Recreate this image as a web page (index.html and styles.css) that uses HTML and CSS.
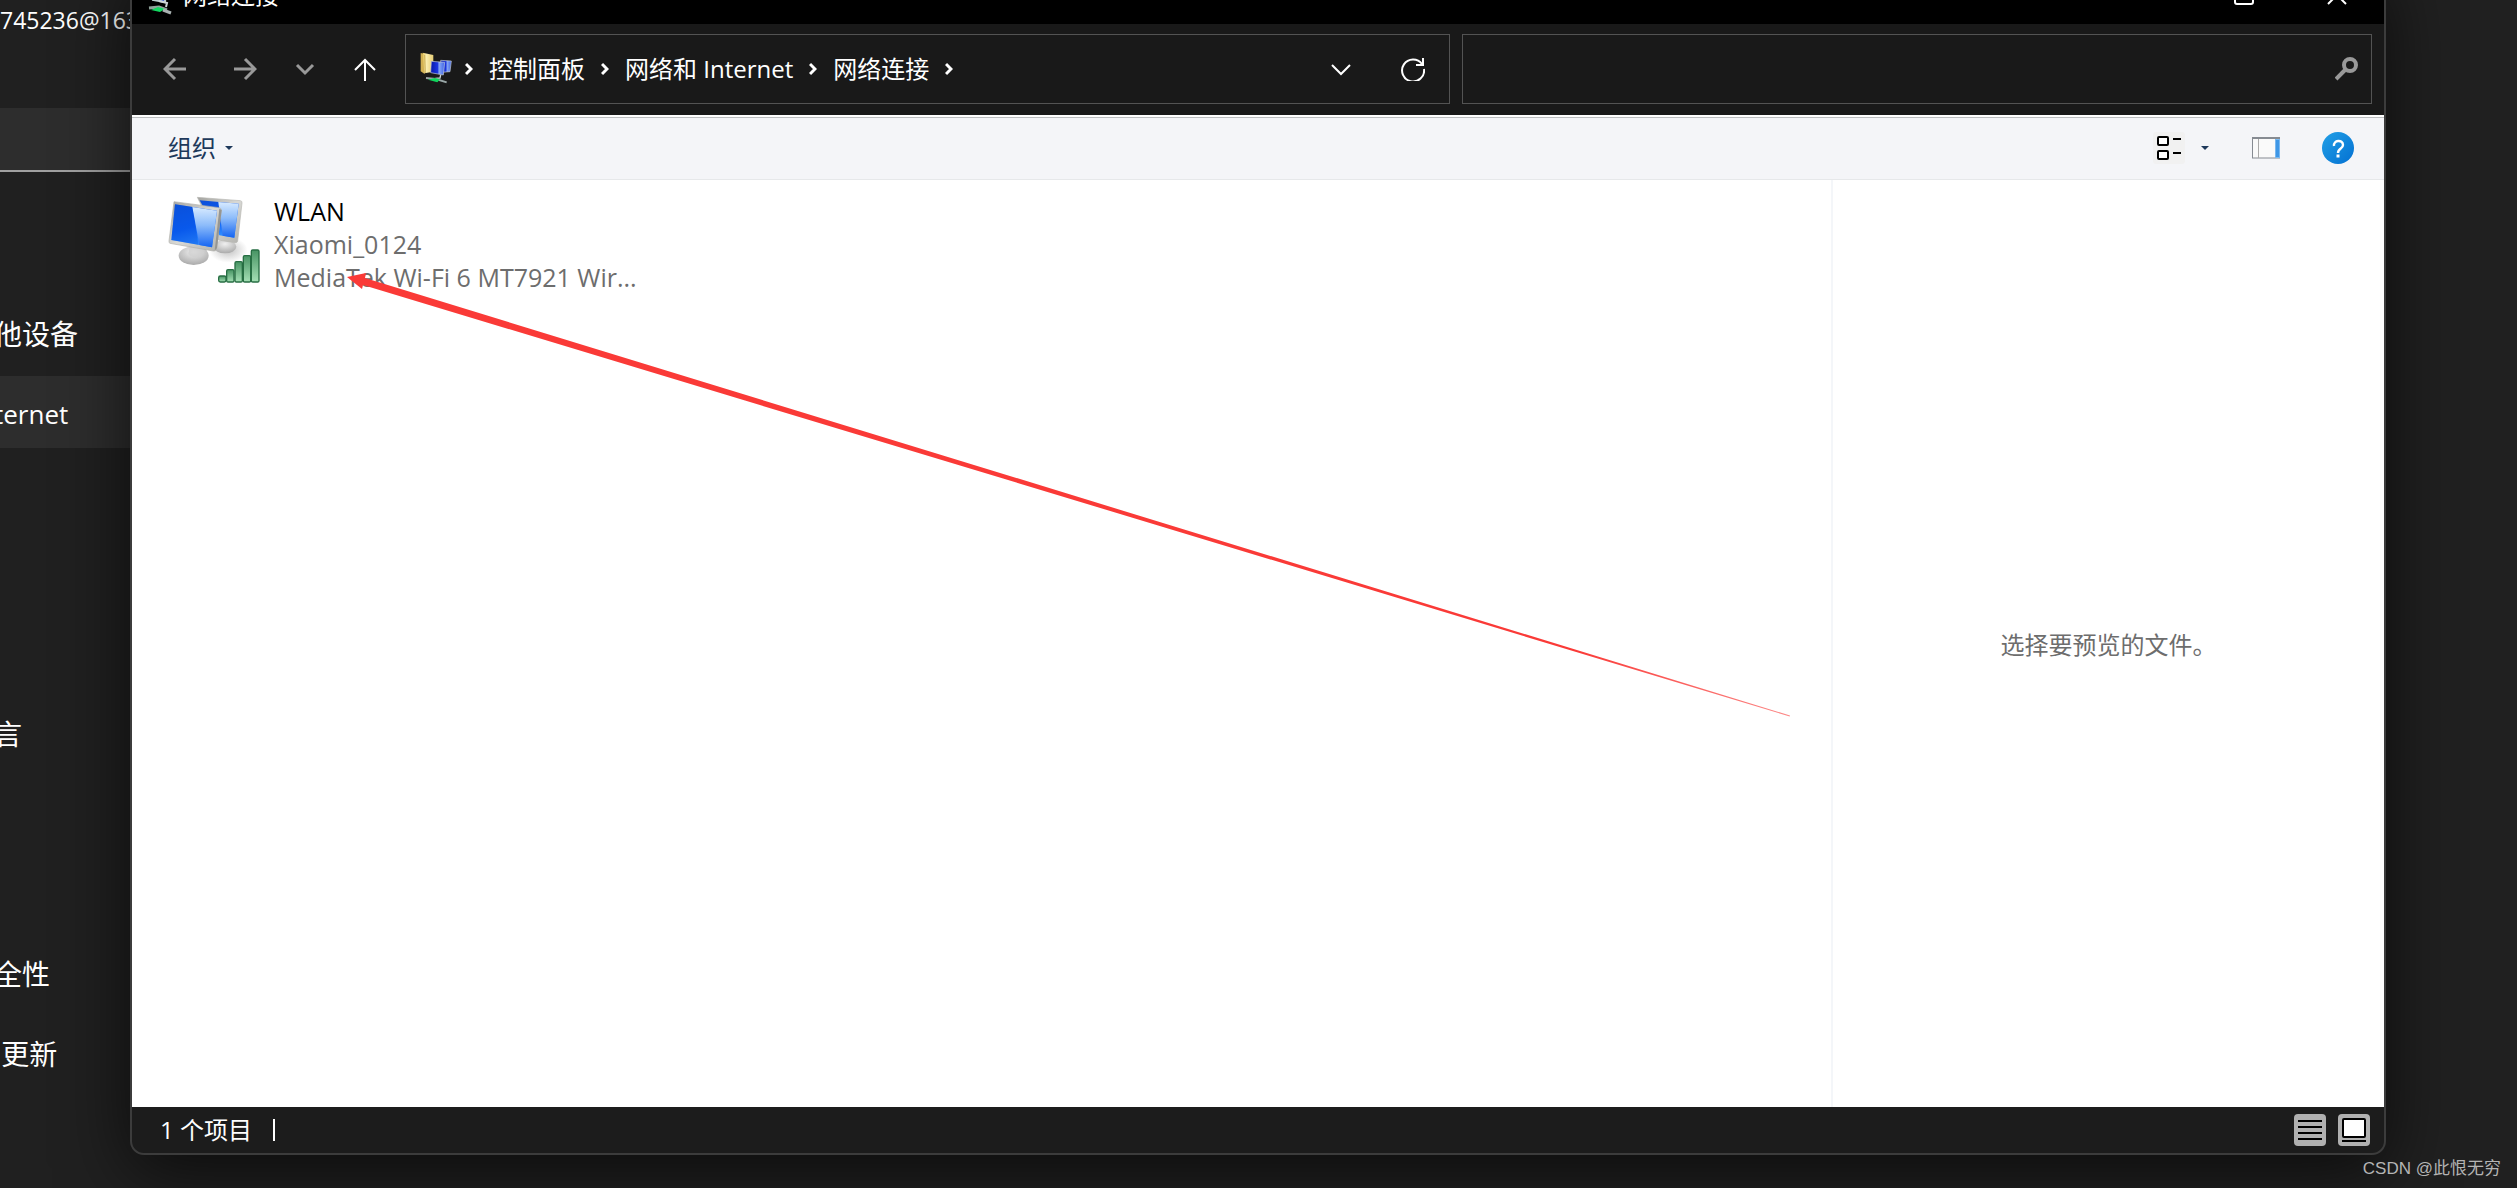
FILE: index.html
```html
<!DOCTYPE html>
<html lang="zh-CN">
<head>
<meta charset="utf-8">
<meta name="viewport" content="width=device-width, initial-scale=1">
<title>网络连接</title>
<link rel="stylesheet" href="styles.css">
</head>
<body>
<div class="desktop">
  <aside class="settings">
    <div class="account">745236@163</div>
    <div class="settings-search"></div>
    <nav class="settings-nav" aria-label="设置">
      <a class="settings-link" href="#devices">他设备</a>
      <a class="settings-link selected" href="#network">ternet</a>
      <span class="settings-space"></span>
      <span class="settings-space"></span>
      <span class="settings-space"></span>
      <a class="settings-link" href="#language">言</a>
      <span class="settings-space"></span>
      <span class="settings-space"></span>
      <a class="settings-link" href="#privacy">全性</a>
      <a class="settings-link" href="#update">&nbsp;更新</a>
    </nav>
  </aside>

  <main class="window">
    <header class="titlebar">
      <svg class="title-icon" width="28" height="30" viewBox="0 0 28 30" aria-hidden="true">
        <path d="M8 4l12 1-1 12-12-2z" fill="#2a49d8" stroke="#bcc" stroke-width="2"/>
        <path d="M13 16l8 2-1 4" fill="none" stroke="#cfd6d8" stroke-width="2"/>
        <path d="M3 23l10-1 8 3" fill="none" stroke="#8fa39a" stroke-width="3"/>
        <path d="M5 25l7-3 7 2-5 3z" fill="#12d860"/>
        <path d="M17 25l8 3" stroke="#a9b2b2" stroke-width="3"/>
      </svg>
      <h1 class="title">网络连接</h1>
      <div class="caption-buttons">
        <button class="caption" type="button" aria-label="最大化">
          <svg width="20" height="20" viewBox="0 0 20 20"><rect x="1" y="1" width="18" height="18" rx="2" fill="none" stroke="#fff" stroke-width="2"/></svg>
        </button>
        <button class="caption" type="button" aria-label="关闭">
          <svg width="20" height="20" viewBox="0 0 20 20"><path d="M1 1l18 18M19 1L1 19" stroke="#fff" stroke-width="2"/></svg>
        </button>
      </div>
    </header>

    <div class="navbar">
      <div class="history">
        <button class="icon-button dim" type="button" aria-label="后退">
          <svg width="24" height="24" viewBox="0 0 24 24"><path d="M23 12H2M12 2L2 12l10 10"/></svg>
        </button>
        <button class="icon-button dim" type="button" aria-label="前进">
          <svg width="24" height="24" viewBox="0 0 24 24"><path d="M1 12h21M12 2l10 10-10 10"/></svg>
        </button>
        <button class="icon-button dim narrow" type="button" aria-label="最近浏览的位置">
          <svg width="20" height="24" viewBox="0 0 20 24"><path d="M2 8l8 8 8-8"/></svg>
        </button>
        <button class="icon-button" type="button" aria-label="上移">
          <svg width="24" height="24" viewBox="0 0 24 24"><path d="M12 24V3M2 13L12 3l10 10"/></svg>
        </button>
      </div>
      <div class="address">
        <svg class="address-icon" width="34" height="34" viewBox="0 0 102 102" aria-hidden="true">
          <defs>
            <linearGradient id="folder" x1="0" x2="1"><stop offset="0" stop-color="#e3c45c"/><stop offset=".35" stop-color="#fbeeb0"/><stop offset="1" stop-color="#e6cd74"/></linearGradient>
            <linearGradient id="small" x1="0" x2="1"><stop offset="0" stop-color="#0818a8"/><stop offset=".5" stop-color="#1c36e0"/><stop offset=".6" stop-color="#88a8f4"/><stop offset="1" stop-color="#3d63e8"/></linearGradient>
          </defs>
          <path d="M2 3l12 3v60L2 58z" fill="#d3b254"/>
          <path d="M8 2l32 7v50l-27 5z" fill="url(#folder)"/>
          <path d="M14 9l2 54" stroke="#b99b44" stroke-width="2"/>
          <path d="M62 25l32 2-4 32-26 2z" fill="url(#small)" stroke="#c4cbd6" stroke-width="2"/>
          <path d="M34 28l40 3-4 38-38-7z" fill="url(#small)" stroke="#c4cbd6" stroke-width="2"/>
          <path d="M62 69l-2 9-14 1" fill="none" stroke="#c9d2d6" stroke-width="4"/>
          <path d="M18 78l30 3 32 10" fill="none" stroke="#9aa7a7" stroke-width="6"/>
          <path d="M24 83l20-5 16 4-8 9z" fill="#10d65c"/>
        </svg>
        <nav class="crumbs" aria-label="路径">
          <svg class="sep" width="8" height="14" viewBox="0 0 8 14"><path d="M1 2l5 5-5 5"/></svg>
          <a href="#control-panel">控制面板</a>
          <svg class="sep" width="8" height="14" viewBox="0 0 8 14"><path d="M1 2l5 5-5 5"/></svg>
          <a href="#network-internet">网络和 Internet</a>
          <svg class="sep" width="8" height="14" viewBox="0 0 8 14"><path d="M1 2l5 5-5 5"/></svg>
          <a href="#connections">网络连接</a>
          <svg class="sep" width="8" height="14" viewBox="0 0 8 14"><path d="M1 2l5 5-5 5"/></svg>
        </nav>
        <div class="address-actions">
          <button class="icon-button" type="button" aria-label="以前的位置">
            <svg width="24" height="24" viewBox="0 0 24 24"><path d="M3 8l9 9 9-9"/></svg>
          </button>
          <button class="icon-button" type="button" aria-label="刷新">
            <svg width="24" height="24" viewBox="0 0 24 24"><path d="M21 7A11 11 0 1 0 23 12M22 1v7h-7"/></svg>
          </button>
        </div>
      </div>
      <label class="search">
        <input type="search" aria-label="搜索 网络连接">
        <svg width="24" height="24" viewBox="0 0 24 24" aria-hidden="true"><circle cx="15" cy="8" r="6" fill="none" stroke="#999" stroke-width="4"/><path d="M11 12L1 22" stroke="#999" stroke-width="4"/></svg>
      </label>
    </div>

    <div class="toolbar">
      <button class="organize" type="button">组织
        <svg width="8" height="4" viewBox="0 0 8 4"><path d="M0 0h8L4 4z" fill="#1e395b"/></svg>
      </button>
      <div class="toolbar-right">
        <button class="tool" type="button" aria-label="更改视图">
          <svg width="32" height="32" viewBox="0 0 32 32"><rect width="32" height="32" rx="3" fill="#f1f1f1"/><g fill="#fff" stroke="#000" stroke-width="2"><rect x="5" y="5" width="10" height="8" rx="1"/><rect x="5" y="19" width="10" height="8" rx="1"/><path d="M20 7h8M20 21h8"/></g></svg>
        </button>
        <button class="tool more" type="button" aria-label="更多选项">
          <svg width="8" height="4" viewBox="0 0 8 4"><path d="M0 0h8L4 4z" fill="#1e395b"/></svg>
        </button>
        <button class="tool pane" type="button" aria-label="隐藏预览窗格">
          <svg width="28" height="22" viewBox="0 0 28 22"><rect x=".5" y="1" width="27" height="20" fill="#fafafa" stroke="#868b92"/><path d="M0 1h28" stroke="#868b92" stroke-width="2"/><path d="M6.500 2v19" stroke="#aaa"/><path d="M23 2h5v19h-5z" fill="#79b8f0"/><path d="M24 3h3v17h-3z" fill="#3f97e6"/></svg>
        </button>
        <button class="tool help" type="button" aria-label="获取帮助">
          <svg width="32" height="32" viewBox="0 0 32 32"><defs><linearGradient id="blue" x1="0" y1="0" x2="1" y2="1"><stop offset="0" stop-color="#22a0e6"/><stop offset="1" stop-color="#0370d2"/></linearGradient></defs><circle cx="16" cy="16" r="16" fill="url(#blue)"/><path d="M12 14c-1-6 9-7 9-1 0 4-5 3-5 8" fill="none" stroke="#fff" stroke-width="2.400"/><rect x="14.500" y="22.500" width="3" height="3" fill="#fff"/></svg>
        </button>
      </div>
    </div>

    <div class="content">
      <section class="items" aria-label="网络连接列表">
        <a class="connection" href="#wlan">
          <svg width="110" height="100" viewBox="0 0 330 300" aria-hidden="true">
            <defs>
              <linearGradient id="screen" x1="0" y1="0" x2=".3" y2="1"><stop offset="0" stop-color="#0e4fd8"/><stop offset=".6" stop-color="#0a5cf4"/><stop offset="1" stop-color="#2f8bff"/></linearGradient>
              <linearGradient id="shine" x1="0" y1="0" x2="0" y2="1"><stop offset="0" stop-color="#d8ebff"/><stop offset=".45" stop-color="#8dbcfa"/><stop offset="1" stop-color="#1464f2"/></linearGradient>
              <linearGradient id="frame" x1="0" y1="0" x2="1" y2="1"><stop offset="0" stop-color="#a2a29e"/><stop offset=".5" stop-color="#d9d9d5"/><stop offset="1" stop-color="#b0b0ac"/></linearGradient>
              <radialGradient id="base" cx=".5" cy=".3" r=".7"><stop offset="0" stop-color="#f0f0f0"/><stop offset="1" stop-color="#aaa"/></radialGradient>
              <linearGradient id="bar" x1="0" y1="0" x2="0" y2="1"><stop offset="0" stop-color="#479363"/><stop offset="1" stop-color="#a5e0b5"/></linearGradient>
              <radialGradient id="shadow"><stop offset="0" stop-color="#999" stop-opacity=".6"/><stop offset="1" stop-color="#999" stop-opacity="0"/></radialGradient>
            </defs>
            <ellipse cx="205" cy="180" rx="58" ry="38" fill="url(#shadow)"/>
            <ellipse cx="195" cy="170" rx="34" ry="20" fill="url(#base)"/>
            <path d="M112 22l129 10q6 1 5 7l-13 114q-1 6-8 5l-50-8z" fill="url(#frame)" stroke="#b8b8b4" stroke-width="2"/>
            <path d="M119 31l117 10-13 102-45-7z" fill="url(#screen)"/>
            <path d="M175 36l61 5-13 102-35-6z" fill="url(#shine)"/>
            <path d="M88 158l50 8 3 28H84z" fill="#b9b9b8"/>
            <ellipse cx="101" cy="197" rx="45" ry="28" fill="url(#base)"/>
            <path d="M90 166l41 6-3 25q-30 12-43-5z" fill="#cfcfce" opacity=".7"/>
            <path d="M42 35l135 18q7 1 7 8l-15 117q-2 6-9 5L30 160q-4-1-3-7z" fill="url(#frame)" stroke="#b0b0ac" stroke-width="2"/>
            <path d="M178 56l7 4-14 114-7 8z" fill="#969692"/>
            <path d="M45 43l126 19-15 110L34 150z" fill="url(#screen)"/>
            <path d="M97 51l74 11-15 110-38-7z" fill="url(#shine)"/>
            <path d="M45 43l52 8 18 113-81-14z" fill="#0752dc" opacity=".35"/>
            <g fill="url(#bar)" stroke="#276e43" stroke-width="4"><rect x="176" y="258" width="22" height="18" rx="5"/><rect x="200" y="239" width="22" height="37" rx="4"/><rect x="225" y="215" width="22" height="61" rx="4"/><rect x="250" y="197" width="22" height="79" rx="4"/><rect x="274" y="180" width="23" height="96" rx="4"/></g>
          </svg>
          <span class="connection-text">
            <span class="name">WLAN</span>
            <span>Xiaomi_0124</span>
            <span>MediaTek Wi-Fi 6 MT7921 Wir...</span>
          </span>
        </a>
      </section>
      <aside class="preview">选择要预览的文件。</aside>
      <svg class="arrow" width="1680" height="560" viewBox="0 0 1680 560" aria-hidden="true">
        <defs><linearGradient id="fade"><stop offset="0" stop-color="#fa3a37"/><stop offset=".85" stop-color="#fa3a37"/><stop offset="1" stop-color="#fa3a37" stop-opacity=".6"/></linearGradient></defs>
        <path d="M215 97l19-4-1 5L1658 535.500l-.3 1L231 105l-1 4z" fill="url(#fade)"/>
      </svg>
    </div>

    <footer class="status">
      <span class="count">1 个项目</span>
      <span class="status-rule"></span>
      <div class="views">
        <button class="tool" type="button" aria-label="详细信息">
          <svg width="32" height="32" viewBox="0 0 32 32"><rect width="32" height="32" rx="4" fill="#b0b0b0"/><path d="M4 7h24M4 13h24M4 19h24M4 25h24" stroke="#000" stroke-width="2"/></svg>
        </button>
        <button class="tool" type="button" aria-label="大缩略图">
          <svg width="32" height="32" viewBox="0 0 32 32"><rect width="32" height="32" rx="4" fill="#b0b0b0"/><rect x="5" y="5" width="22" height="18" rx="1" fill="#fff" stroke="#000" stroke-width="2"/><path d="M4 27h24" stroke="#000" stroke-width="2"/></svg>
        </button>
      </div>
    </footer>
  </main>
  <div class="watermark">CSDN @此恨无穷</div>
</div>
</body>
</html>
```
FILE: styles.css
```css
* { box-sizing: border-box; }

body {
  margin: 0;
  background: #202020;
  color: #fff;
  font-family: "Open Sans", "Noto Sans CJK SC", sans-serif;
  font-size: 24px;
}

a { color: inherit; text-decoration: none; }

button {
  display: flex;
  align-items: center;
  justify-content: center;
  padding: 0;
  border: 0;
  background: none;
  color: inherit;
  font: inherit;
}

svg { display: block; flex: none; }

.desktop {
  position: relative;
  display: grid;
  grid-template-columns: 130px minmax(0, 1fr);
  min-height: 100vh;
  overflow: hidden;
}

/* Settings window, mostly hidden behind the network window */
.settings { overflow: hidden; white-space: nowrap; }

.account {
  height: 108px;
  line-height: 40px;
  font-size: 23px;
}

.settings-search {
  height: 64px;
  margin-bottom: 124px;
  background: #2d2d2d;
  border-bottom: 2px solid #a0a0a0;
}

.settings-nav {
  display: flex;
  flex-direction: column;
  gap: 8px;
  font-size: 28px;
}

.settings-link,
.settings-space {
  height: 72px;
  line-height: 76px;
  text-indent: -6px;
}

.settings-link.selected { background: #2d2d2d; font-size: 26px; }

/* Network window */
.window {
  position: relative;
  display: flex;
  flex-direction: column;
  margin: -36px 131px 33px 0;
  border: 2px solid #3c3c3c;
  border-radius: 14px;
  background: #1c1c1c;
  box-shadow: 0 16px 70px rgba(0, 0, 0, .65);
}

.titlebar {
  display: flex;
  align-items: center;
  height: 58px;
  padding: 0 37px 0 14px;
  border-radius: 12px 12px 0 0;
  background: #000;
}

.title { margin: 0 0 0 9px; font-size: 24px; font-weight: 400; line-height: 36px; }
.title-icon { margin-top: 10px; }
.caption-buttons { display: flex; gap: 73px; margin-left: auto; }

.navbar {
  display: flex;
  align-items: center;
  height: 91px;
  padding: 0 12px 2px 31px;
  background: #191919;
}

.history { display: flex; gap: 46px; width: 242px; }
.icon-button svg { fill: none; stroke: #fff; stroke-width: 2; }
.icon-button.dim svg { stroke: #999; stroke-width: 3; }
.icon-button.narrow { margin: 0 -8px; }

.address {
  display: flex;
  align-items: center;
  flex: 1005 1 0;
  height: 70px;
  padding: 0 24px 0 14px;
  border: 1px solid #535353;
}

.crumbs {
  display: flex;
  align-items: center;
  gap: 16px;
  margin-left: 11px;
  line-height: 36px;
  white-space: nowrap;
}

.sep { fill: none; stroke: #fff; stroke-width: 3; }
.address-actions { display: flex; gap: 48px; margin-left: auto; }

.search {
  display: flex;
  align-items: center;
  flex: 884 1 0;
  height: 70px;
  margin-left: 12px;
  padding: 0 12px;
  border: 1px solid #535353;
}

.search input {
  flex: 1;
  min-width: 0;
  border: 0;
  outline: 0;
  background: none;
  color: #fff;
  font: inherit;
}

.toolbar {
  display: flex;
  align-items: center;
  justify-content: space-between;
  height: 65px;
  padding: 0 30px 0 36px;
  border-top: 2px solid #fff;
  border-bottom: 1px solid #e6e8ea;
  background: #f4f5f8;
  box-shadow: inset 0 1px #bcbec0;
  color: #1e395b;
}

.organize { gap: 9px; line-height: 36px; }
.toolbar-right { display: flex; align-items: center; }
.more { width: 40px; }
.pane { width: 82px; }
.help { margin-left: 15px; }

.content {
  position: relative;
  display: flex;
  flex: 1;
  background: #fff;
}

.items { flex: 1; padding: 10px 28px; }
.connection { display: inline-flex; color: #6d6d6d; font-size: 25px; }

.connection-text {
  display: flex;
  flex-direction: column;
  padding: 5px 4px;
  line-height: 33px;
  white-space: nowrap;
}

.name { color: #000; }

.preview {
  display: flex;
  align-items: center;
  justify-content: center;
  width: 553px;
  border-left: 2px solid #f4f6f9;
  color: #6d6d6d;
}

/* Hand-drawn pointer laid over the file list */
.arrow { position: absolute; top: 0; left: 0; pointer-events: none; }

.status {
  display: flex;
  align-items: center;
  height: 46px;
  padding: 0 14px 0 28px;
  line-height: 36px;
}

.status-rule { width: 2px; height: 22px; margin-left: 21px; background: #fff; }
.views { display: flex; gap: 12px; margin-left: auto; }

.watermark {
  position: absolute;
  right: 16px;
  bottom: 6px;
  color: #b4b4b4;
  font-family: "Liberation Sans", "Noto Sans CJK SC", sans-serif;
  font-size: 17px;
  line-height: 26px;
}
```
